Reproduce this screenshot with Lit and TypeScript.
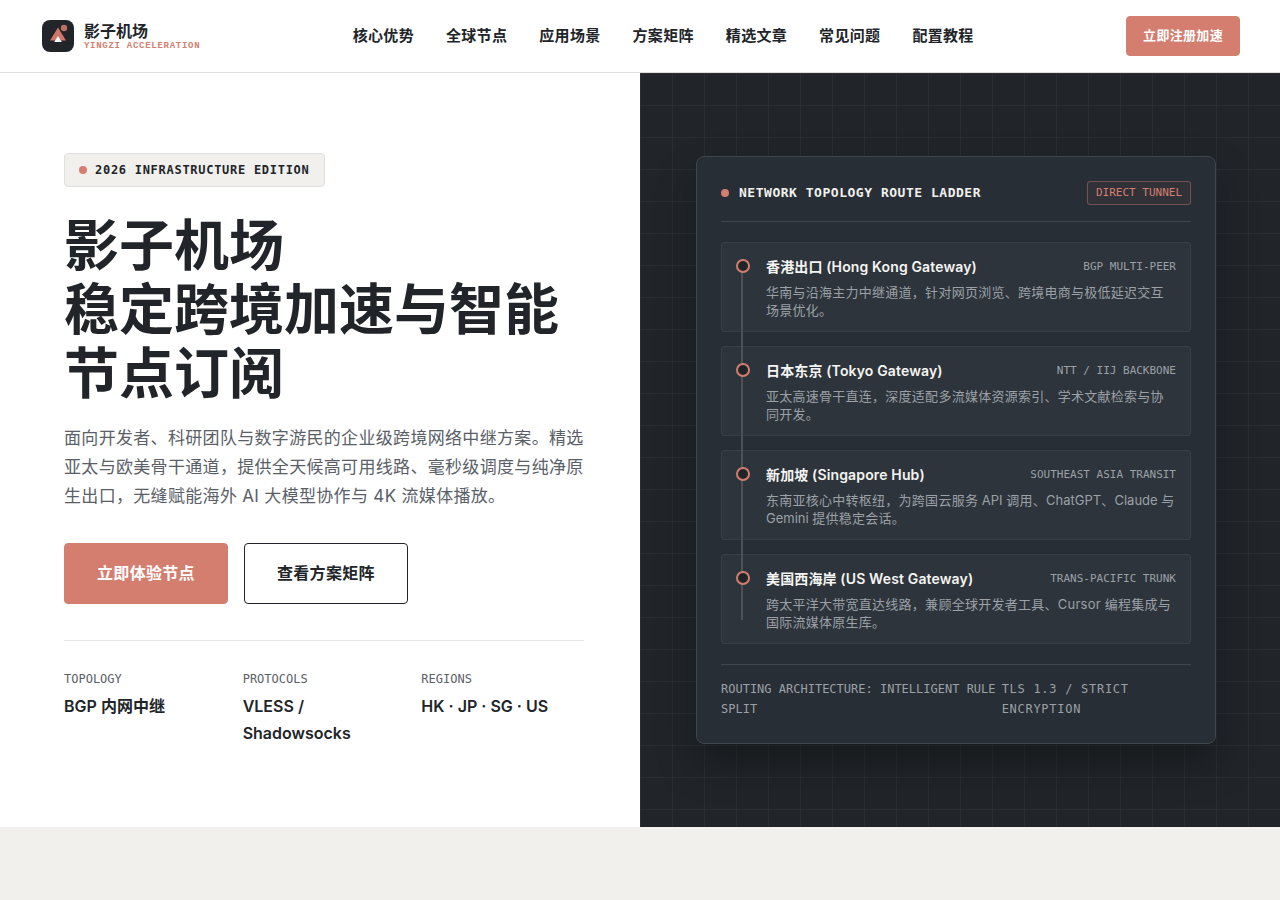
import { LitElement, html, css, svg } from "lit";
import { customElement } from "lit/decorators.js";

const NAV = ["核心优势", "全球节点", "应用场景", "方案矩阵", "精选文章", "常见问题", "配置教程"];

const STATS = [
  { label: "TOPOLOGY", value: "BGP 内网中继" },
  { label: "PROTOCOLS", value: "VLESS / Shadowsocks" },
  { label: "REGIONS", value: "HK · JP · SG · US" },
];

const LEAD =
  "面向开发者、科研团队与数字游民的企业级跨境网络中继方案。精选亚太与欧美骨干通道，提供全天候高可用线路、毫秒级调度与纯净原生出口，无缝赋能海外 AI 大模型协作与 4K 流媒体播放。";

interface Route {
  name: string;
  tag: string;
  text: string;
  manyLatinWords?: boolean;
}

const ROUTES: Route[] = [
  {
    name: "香港出口 (Hong Kong Gateway)",
    tag: "BGP MULTI-PEER",
    text: "华南与沿海主力中继通道，针对网页浏览、跨境电商与极低延迟交互场景优化。",
  },
  {
    name: "日本东京 (Tokyo Gateway)",
    tag: "NTT / IIJ BACKBONE",
    text: "亚太高速骨干直连，深度适配多流媒体资源索引、学术文献检索与协同开发。",
  },
  {
    name: "新加坡 (Singapore Hub)",
    tag: "SOUTHEAST ASIA TRANSIT",
    text: "东南亚核心中转枢纽，为跨国云服务 API 调用、ChatGPT、Claude 与 Gemini 提供稳定会话。",
    manyLatinWords: true,
  },
  {
    name: "美国西海岸 (US West Gateway)",
    tag: "TRANS-PACIFIC TRUNK",
    text: "跨太平洋大带宽直达线路，兼顾全球开发者工具、Cursor 编程集成与国际流媒体原生库。",
  },
];

// Chinese copy is lightly tracked; in copy rich in Latin words those keep their default spacing.
const mixed = (text: string) =>
  text
    .split(/([ A-Za-z0-9]+)/)
    .map((part, i) => (i % 2 ? html`<span class="latin" lang="en">${part}</span>` : part));

const logo = svg`
  <rect width="32" height="32" rx="8" fill="#212529"/>
  <path d="M16 7.5 L24 20.5 H8 Z" fill="#cf7668"/>
  <path d="M16 16 L19.8 22 H12.2 Z" fill="#ffffff"/>
  <circle cx="22" cy="8" r="3.2" fill="#d47e70" fill-opacity="0.85"/>
`;

@customElement("app-root")
export class AppRoot extends LitElement {
  static styles = css`
    :host {
      display: block;
      min-height: 100vh;
      background: #f1f0ec;
      color: #212529;
      font-family: Inter, "Noto Sans CJK SC", sans-serif;
      font-size: 16px;
      line-height: 27px;
      letter-spacing: 0.02em;
      --accent: #d47e70;
      --mono: "DejaVu Sans Mono", monospace;
    }
    * {
      box-sizing: border-box;
    }
    a {
      color: inherit;
      text-decoration: none;
    }
    h1, h2, h3, p, dl, dd, ol {
      margin: 0;
      padding: 0;
    }
    .latin {
      letter-spacing: 0;
    }
    .bar {
      display: flex;
      align-items: center;
      justify-content: space-between;
      padding: 16px 40px;
      background: #ffffff;
      border-bottom: 1px solid #dfdfdf;
    }
    .brand {
      display: flex;
      align-items: center;
      gap: 10px;
      padding-left: 2px;
    }
    .brand svg {
      display: block;
      width: 32px;
      height: 32px;
    }
    .brand-text {
      display: flex;
      flex-direction: column;
      gap: 1px;
    }
    .brand-name {
      font-size: 16px;
      line-height: 18px;
      font-weight: 700;
      letter-spacing: 0;
    }
    .brand-sub {
      font-family: "Liberation Mono", monospace;
      font-size: 9px;
      line-height: 10px;
      font-weight: 700;
      letter-spacing: 0.08em;
      color: var(--accent);
    }
    .menu {
      display: flex;
      gap: 32px;
      font-size: 15px;
      line-height: 26px;
      font-weight: 600;
    }
    .btn {
      display: inline-block;
      border: 1px solid var(--accent);
      border-radius: 4px;
      background: var(--accent);
      color: #ffffff;
      font-weight: 600;
      padding: 16px 32px;
    }
    .btn.small {
      font-size: 13px;
      line-height: 20px;
      padding: 8px 16px 10px;
    }
    .btn.outline {
      background: #ffffff;
      border-color: #212529;
      color: #212529;
    }
    .hero {
      display: grid;
      grid-template-columns: 1fr 1fr;
    }
    .intro {
      background: #ffffff;
      padding: 80px 56px 80px 64px;
    }
    .badge {
      display: inline-flex;
      align-items: center;
      gap: 8px;
      padding: 6px 14px;
      border: 1px solid #dfdfdd;
      border-radius: 4px;
      background: #f1f0ec;
      font-family: var(--mono);
      font-size: 12px;
      line-height: 20px;
      font-weight: 700;
      letter-spacing: 0.06em;
      vertical-align: top;
    }
    .dot {
      width: 8px;
      height: 8px;
      border-radius: 50%;
      background: var(--accent);
    }
    h1 {
      margin-top: 26px;
      font-size: 55px;
      line-height: 64px;
      font-weight: 700;
      letter-spacing: 0;
    }
    .lead {
      margin-top: 19px;
      font-size: 17px;
      line-height: 29px;
      color: #5a6068;
    }
    .actions {
      display: flex;
      gap: 16px;
      margin-top: 32px;
    }
    .stats {
      display: grid;
      grid-template-columns: repeat(3, 1fr);
      gap: 16px;
      margin-top: 36px;
      padding-top: 28px;
      border-top: 1px solid #e4e5e5;
    }
    .stats dt {
      font-family: var(--mono);
      font-size: 12px;
      line-height: 20px;
      letter-spacing: 0;
      color: #5a6068;
    }
    .stats dd {
      margin-top: 4px;
      font-weight: 600;
      letter-spacing: 0;
    }
    .stage {
      display: flex;
      align-items: center;
      justify-content: center;
      padding: 80px 64px 80px 56px;
      background-color: #212529;
      background-image: linear-gradient(rgba(255, 255, 255, 0.04) 1px, transparent 1px),
        linear-gradient(90deg, rgba(255, 255, 255, 0.04) 1px, transparent 1px);
      background-size: 32px 32px;
    }
    .card {
      width: 100%;
      max-width: 520px;
      padding: 24px;
      border: 1px solid #40464c;
      border-radius: 8px;
      background: #282e35;
      box-shadow: 0 20px 40px rgba(0, 0, 0, 0.3);
    }
    .card-head {
      display: flex;
      align-items: center;
      justify-content: space-between;
      padding-bottom: 16px;
      margin-bottom: 20px;
      border-bottom: 1px solid #40464c;
    }
    .card-head h2 {
      display: flex;
      align-items: center;
      gap: 10px;
      font-family: var(--mono);
      font-size: 13px;
      line-height: 22px;
      font-weight: 700;
      letter-spacing: 0.04em;
      color: #f1f0ec;
    }
    .pill {
      padding: 2px 8px;
      border: 1px solid rgba(212, 126, 112, 0.4);
      border-radius: 3px;
      background: rgba(212, 126, 112, 0.06);
      font-family: var(--mono);
      font-size: 11px;
      line-height: 18px;
      letter-spacing: 0;
      color: var(--accent);
    }
    .ladder {
      position: relative;
      display: flex;
      flex-direction: column;
      gap: 14px;
      list-style: none;
    }
    .ladder::before {
      content: "";
      position: absolute;
      left: 20px;
      top: 24px;
      bottom: 24px;
      width: 2px;
      background: #4b5157;
    }
    .route {
      display: flex;
      gap: 16px;
      padding: 14px 14px 12px;
      border: 1px solid rgba(255, 255, 255, 0.05);
      border-radius: 3px;
      background: rgba(255, 255, 255, 0.03);
    }
    .ring {
      position: relative;
      flex: none;
      width: 14px;
      height: 14px;
      margin-top: 2px;
      border: 2px solid var(--accent);
      border-radius: 50%;
      background: #212529;
    }
    .route-body {
      flex: 1;
    }
    .route-head {
      display: flex;
      align-items: center;
      justify-content: space-between;
      margin-bottom: 6px;
    }
    .route h3 {
      font-size: 14px;
      line-height: 20px;
      font-weight: 600;
      letter-spacing: 0.01em;
      color: #f4f4f2;
    }
    .tag {
      font-family: var(--mono);
      font-size: 11px;
      line-height: 18px;
      letter-spacing: 0;
      color: #9ba1a7;
    }
    .route p {
      font-size: 13px;
      line-height: 18px;
      letter-spacing: 0.02em;
      color: #9ba1a7;
    }
    .card-foot {
      display: flex;
      justify-content: space-between;
      margin-top: 20px;
      padding-top: 14px;
      border-top: 1px solid #40464c;
      font-family: var(--mono);
      font-size: 12px;
      line-height: 20px;
      letter-spacing: 0;
      color: #9ba1a7;
    }
    .secure {
      letter-spacing: 0.06em;
    }
  `;

  render() {
    return html`
      <header class="bar">
        <a class="brand" href="#">
          <svg viewBox="0 0 32 32" aria-hidden="true">${logo}</svg>
          <span class="brand-text">
            <span class="brand-name">影子机场</span>
            <span class="brand-sub">YINGZI ACCELERATION</span>
          </span>
        </a>
        <nav class="menu">${NAV.map((n) => html`<a href="#">${n}</a>`)}</nav>
        <a class="btn small" href="#">立即注册加速</a>
      </header>
      <main class="hero">
        <section class="intro">
          <div class="badge"><span class="dot"></span>2026 INFRASTRUCTURE EDITION</div>
          <h1>影子机场<br />稳定跨境加速与智能节点订阅</h1>
          <p class="lead">${LEAD}</p>
          <div class="actions">
            <a class="btn" href="#">立即体验节点</a>
            <a class="btn outline" href="#">查看方案矩阵</a>
          </div>
          <dl class="stats">
            ${STATS.map((s) => html`<div><dt>${s.label}</dt><dd>${s.value}</dd></div>`)}
          </dl>
        </section>
        <section class="stage">
          <div class="card">
            <div class="card-head">
              <h2><span class="dot"></span>NETWORK TOPOLOGY ROUTE LADDER</h2>
              <span class="pill">DIRECT TUNNEL</span>
            </div>
            <ol class="ladder">
              ${ROUTES.map(
                (r) => html`<li class="route">
                  <span class="ring"></span>
                  <div class="route-body">
                    <div class="route-head"><h3>${r.name}</h3><span class="tag">${r.tag}</span></div>
                    <p>${r.manyLatinWords ? mixed(r.text) : r.text}</p>
                  </div>
                </li>`
              )}
            </ol>
            <div class="card-foot">
              <span>ROUTING ARCHITECTURE: INTELLIGENT RULE SPLIT</span>
              <span class="secure">TLS 1.3 / STRICT ENCRYPTION</span>
            </div>
          </div>
        </section>
      </main>
    `;
  }
}
